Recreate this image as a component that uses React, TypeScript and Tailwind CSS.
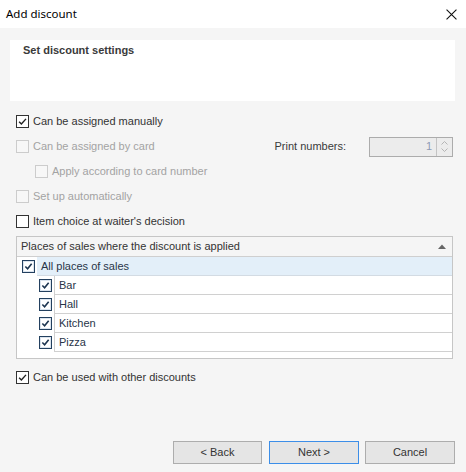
import React from 'react';

const font = { fontFamily: '"Liberation Sans", Arial, sans-serif' };
const titleFont = { fontFamily: '"Noto Sans", "Liberation Sans", sans-serif' };

function Check({ color = '#222' }: { color?: string }) {
  return (
    <svg viewBox="0 0 13 13" className="w-[13px] h-[13px]">
      <path d="M2.5 6.8 L5.2 9.4 L10.6 3.4" fill="none" stroke={color} strokeWidth="1.7" />
    </svg>
  );
}

function WinCheckbox({ label, checked = false, disabled = false, indent = false }: { label: string; checked?: boolean; disabled?: boolean; indent?: boolean }) {
  return (
    <div className={`flex items-center h-[25px] ${indent ? 'pl-[35px]' : 'pl-[16px]'}`}>
      <div
        className={`w-[13px] h-[13px] border flex items-center justify-center ${
          disabled ? 'border-[#cccccc] bg-[#f7f7f7]' : 'border-[#333333] bg-white'
        }`}
      >
        {checked && <Check />}
      </div>
      <span className={`ml-[4px] text-[11px] ${disabled ? 'text-[#a3a3a3]' : 'text-[#333333]'}`}>{label}</span>
    </div>
  );
}

function GridCheck() {
  return (
    <div className="w-[13px] h-[13px] border-[1.5px] border-[#23405f] bg-white flex items-center justify-center shadow-[inset_0_0_0_1px_#dbe4ee]">
      <svg viewBox="0 0 10 10" className="w-[9px] h-[9px]">
        <path d="M1.5 5 L4 7.5 L8.5 2" fill="none" stroke="#1d3550" strokeWidth="1.8" />
      </svg>
    </div>
  );
}

const places = ['Bar', 'Hall', 'Kitchen', 'Pizza'];

export default function App() {
  return (
    <div className="w-[466px] h-[472px] bg-[#f5f5f5] flex flex-col overflow-hidden" style={font}>
      {/* title bar */}
      <div className="h-[28px] bg-white flex items-center justify-between pl-[6px] pr-[9px] shrink-0">
        <span className="text-[11.5px] text-black" style={titleFont}>Add discount</span>
        <svg viewBox="0 0 10 10" className="w-[11px] h-[11px]">
          <path d="M0.5 0.5 L9.5 9.5 M9.5 0.5 L0.5 9.5" stroke="#111" strokeWidth="1" />
        </svg>
      </div>

      {/* header panel */}
      <div className="mt-[12px] ml-[10px] mr-[11px] h-[61px] bg-white pl-[13px] pt-[4px] shrink-0">
        <div className="text-[11px] leading-[12px] font-bold text-[#3a3a3a]">Set discount settings</div>
      </div>

      {/* options */}
      <div className="mt-[8px] shrink-0">
        <WinCheckbox label="Can be assigned manually" checked />
        <div className="flex items-center justify-between pr-[13px]">
          <WinCheckbox label="Can be assigned by card" disabled />
          <div className="flex items-center">
            <span className="text-[11px] text-[#3a3a3a] mr-[23px]">Print numbers:</span>
            <div className="w-[84px] h-[20px] border border-[#acacac] bg-[#ececec] flex">
              <div className="flex-1 flex items-center justify-end pr-[4px] text-[11px] text-[#8d9bb5]">1</div>
              <div className="w-[16px] border-l border-[#c4c4c4] flex flex-col items-center justify-center gap-[3px]">
                <svg viewBox="0 0 7 4" className="w-[7px] h-[4px]">
                  <path d="M0.5 3.5 L3.5 0.5 L6.5 3.5" fill="none" stroke="#b5b5b5" strokeWidth="1" />
                </svg>
                <svg viewBox="0 0 7 4" className="w-[7px] h-[4px]">
                  <path d="M0.5 0.5 L3.5 3.5 L6.5 0.5" fill="none" stroke="#b5b5b5" strokeWidth="1" />
                </svg>
              </div>
            </div>
          </div>
        </div>
        <WinCheckbox label="Apply according to card number" disabled indent />
        <WinCheckbox label="Set up automatically" disabled />
        <WinCheckbox label="Item choice at waiter's decision" />
      </div>

      {/* places grid */}
      <div className="mt-[2px] ml-[16px] w-[437px] h-[123px] border border-[#c6c6c6] bg-white shrink-0 flex flex-col text-[11px] text-[#283548]">
        <div className="h-[20px] bg-[#f5f5f5] border-b border-[#cfcfcf] flex items-center justify-between pl-[4px] pr-[6px] shrink-0">
          <span className="text-[#333333]">Places of sales where the discount is applied</span>
          <svg viewBox="0 0 8 5" className="w-[8px] h-[5px]">
            <path d="M0 5 L4 0.5 L8 5 Z" fill="#666" />
          </svg>
        </div>
        <div className="h-[19px] flex shrink-0">
          <div className="w-[20px] flex items-center justify-center pl-[2px]">
            <GridCheck />
          </div>
          <div className="flex-1 bg-[#e3eff9] border-b border-[#d3dbe3] flex items-center pl-[4px]">All places of sales</div>
        </div>
        {places.map((p) => (
          <div key={p} className="h-[19px] flex shrink-0">
            <div className="w-[37px] flex items-center justify-end pr-[2px]">
              <GridCheck />
            </div>
            <div className="flex-1 border-l border-b border-[#d0d0d0] flex items-center pl-[4px]">{p}</div>
          </div>
        ))}
      </div>

      <div className="mt-[6px] shrink-0">
        <WinCheckbox label="Can be used with other discounts" checked />
      </div>

      {/* buttons */}
      <div className="mt-auto mb-[8px] flex justify-end pr-[11px] shrink-0 text-[11px] text-[#333333]">
        <button className="w-[89px] h-[23px] border border-[#adadad] bg-[#e5e5e5]">&lt; Back</button>
        <button className="ml-[7px] w-[90px] h-[23px] border border-[#3c8ee8] bg-[#e5e5e5]">Next &gt;</button>
        <button className="ml-[6px] w-[90px] h-[23px] border border-[#adadad] bg-[#e5e5e5]">Cancel</button>
      </div>
    </div>
  );
}
